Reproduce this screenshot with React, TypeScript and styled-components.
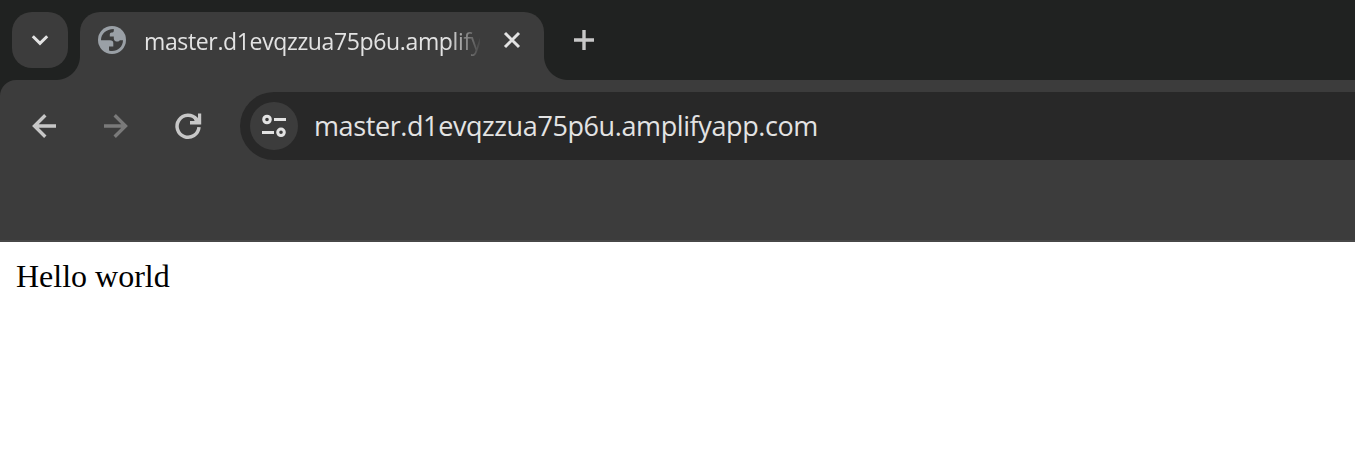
import React from "react";
import styled, { createGlobalStyle } from "styled-components";

const GlobalStyle = createGlobalStyle`
  *, *::before, *::after { box-sizing: border-box; }
  html, body { margin: 0; background: #fff; }
`;

const Window = styled.div`
  width: 100%;
  height: 462px;
  padding-right: 1px;
  display: flex;
  flex-direction: column;
  overflow: hidden;
  background: #fff;
`;

const TabStrip = styled.div`
  height: 80px;
  flex: none;
  display: flex;
  background: #202221;
`;

const TabSearch = styled.button`
  width: 56px;
  height: 56px;
  margin: 12px 12px 0;
  padding: 0;
  border: 0;
  border-radius: 20px;
  display: grid;
  place-items: center;
  background: #3c3c3c;
`;

const Tab = styled.div`
  position: relative;
  width: 464px;
  height: 68px;
  margin-top: 12px;
  padding: 0 20px 12px 18px;
  display: flex;
  align-items: center;
  border-radius: 20px 20px 0 0;
  background: #3c3c3c;
`;

const TabFlare = styled.span<{ $side: "left" | "right" }>`
  position: absolute;
  bottom: 0;
  ${(p) => p.$side}: -24px;
  width: 24px;
  height: 24px;
  background: radial-gradient(
    circle at ${(p) => (p.$side === "left" ? "0 0" : "100% 0")},
    transparent 23.5px,
    #3c3c3c 24.5px
  );
`;

const TabTitle = styled.span`
  width: 336px;
  height: 40px;
  margin-left: 18px;
  overflow: hidden;
  white-space: nowrap;
  font: 23px/42px "Open Sans", sans-serif;
  letter-spacing: -0.36px;
  color: #e3e3e3;
  mask-image: linear-gradient(to right, #000 304px, transparent 338px);
`;

const TabClose = styled.button`
  width: 24px;
  height: 24px;
  margin-left: auto;
  padding: 0;
  border: 0;
  background: none;
`;

const NewTab = styled.button`
  width: 40px;
  height: 40px;
  margin: 20px 0 0 20px;
  padding: 0;
  border: 0;
  display: grid;
  place-items: center;
  background: none;
`;

const ToolbarBackdrop = styled.div`
  flex: none;
  background: #202221;
`;

const Toolbar = styled.div`
  height: 162px;
  padding: 12px 0 0 20px;
  display: flex;
  border-radius: 16px 0 0 0;
  border-bottom: 2px solid #474747;
  background: #3c3c3c;
`;

const NavButton = styled.button<{ $muted?: boolean }>`
  width: 48px;
  height: 68px;
  margin-right: 24px;
  padding: 0;
  border: 0;
  display: grid;
  place-items: center;
  background: none;
  color: ${(p) => (p.$muted ? "#7a7a7a" : "#c7c7c7")};
`;

const AddressBar = styled.div`
  flex: 1;
  height: 68px;
  margin-left: 4px;
  padding-left: 10px;
  display: flex;
  align-items: center;
  border-radius: 34px 0 0 34px;
  background: #282828;
`;

const SiteInfo = styled.button`
  width: 48px;
  height: 48px;
  padding: 0;
  border: 0;
  border-radius: 50%;
  display: grid;
  place-items: center;
  background: #3c3c3c;
`;

const Url = styled.span`
  margin-left: 16px;
  font: 27px/40px "Open Sans", sans-serif;
  letter-spacing: -0.4px;
  color: #e3e3e3;
`;

const Page = styled.main`
  flex: 1;
  padding: 16px;
  font: 32px/37px "Liberation Serif", serif;
  color: #000;
`;

const Icon = styled.svg`
  display: block;
  flex: none;
  fill: none;
  stroke: currentColor;
`;

export default function App() {
  return (
    <>
      <GlobalStyle />
      <Window>
        <TabStrip>
          <TabSearch aria-label="Search tabs">
            <Icon width="24" height="24" color="#e3e3e3" strokeWidth="3">
              <path d="M4.8 8.2 12 15.4l7.2-7.2" />
            </Icon>
          </TabSearch>
          <Tab>
            <TabFlare $side="left" />
            <Icon width="28" height="28" viewBox="0 0 28 28">
              <circle cx="14" cy="14" r="14" fill="#9aa0a6" stroke="none" />
              <path
                d="M3 14.2C3 8 8 3 15.8 3V5C15.6 6.2 14.8 6.6 13.5 6.6Q11.8 6.6 11.8 8.2V10.5H15.8V12.4C16 14.8 17.5 15.6 19.8 15.6Q21.2 15.6 21.8 14.2H25C25 20.5 20 25 14 25Q12.5 25 11 24.5V20.5H15.3V17C15.3 15.2 14.2 14.2 12 14.2Z"
                fill="#3c3c3c"
                stroke="none"
              />
            </Icon>
            <TabTitle>master.d1evqzzua75p6u.amplify</TabTitle>
            <TabClose aria-label="Close tab">
              <Icon width="24" height="24" color="#e3e3e3" strokeWidth="3">
                <path d="m5 5 14 14M19 5 5 19" />
              </Icon>
            </TabClose>
            <TabFlare $side="right" />
          </Tab>
          <NewTab aria-label="New tab">
            <Icon width="24" height="24" color="#c7c7c7" strokeWidth="3.4">
              <path d="M12 2v20M2 12h20" />
            </Icon>
          </NewTab>
        </TabStrip>
        <ToolbarBackdrop>
          <Toolbar>
            <NavButton aria-label="Back">
              <Icon width="32" height="32" strokeWidth="3.4">
                <path d="M28 16H6.5M17.3 5.2 6.5 16 17.3 26.8" />
              </Icon>
            </NavButton>
            <NavButton $muted aria-label="Forward">
              <Icon width="32" height="32" strokeWidth="3.4">
                <path d="M4 16h21.5M14.7 5.2 25.5 16 14.7 26.8" />
              </Icon>
            </NavButton>
            <NavButton aria-label="Reload">
              <Icon width="32" height="32" strokeWidth="3.5">
                <path d="M27 17.2A11 11 0 1 1 24.5 9.2" />
                <path
                  d="M26 3.4h3.2v11H18v-3.4h4.6L21.5 8l1.8-1.8L26 8.2Z"
                  fill="currentColor"
                  stroke="none"
                />
              </Icon>
            </NavButton>
            <AddressBar>
              <SiteInfo aria-label="Site information">
                <Icon width="28" height="28" color="#e3e3e3" strokeWidth="3">
                  <circle cx="7" cy="7.5" r="3.3" />
                  <path d="M14 7.5h12M2 20.5h12" />
                  <circle cx="21" cy="20.3" r="3.3" />
                </Icon>
              </SiteInfo>
              <Url>master.d1evqzzua75p6u.amplifyapp.com</Url>
            </AddressBar>
          </Toolbar>
        </ToolbarBackdrop>
        <Page>Hello world</Page>
      </Window>
    </>
  );
}
